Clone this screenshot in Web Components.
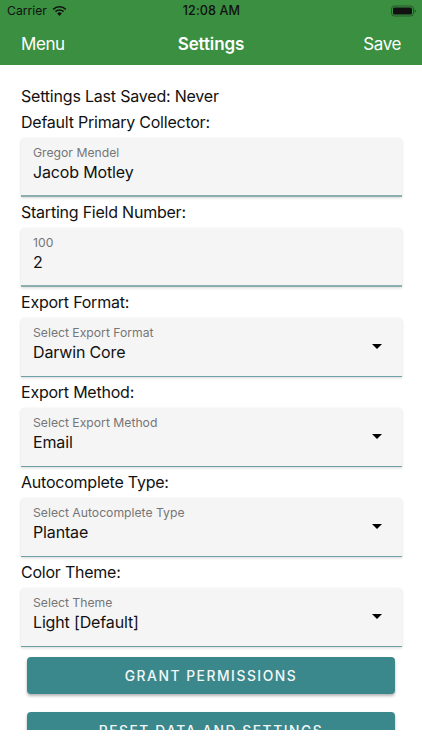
<!DOCTYPE html>
<html>
<head>
<meta charset="utf-8">
<title>Settings</title>
<style>
  html, body { margin: 0; padding: 0; background: #fff; }
  body { font-family: Inter, "Liberation Sans", sans-serif; color: #111; }
</style>
</head>
<body>
<settings-screen>
  <status-bar slot="top"></status-bar>
  <nav-bar slot="top" heading="Settings" left="Menu" right="Save"></nav-bar>
  <plain-line>Settings Last Saved: Never</plain-line>
  <form-row label="Default Primary Collector:" hint="Gregor Mendel" value="Jacob Motley"></form-row>
  <form-row label="Starting Field Number:" hint="100" value="2"></form-row>
  <form-row label="Export Format:" hint="Select Export Format" value="Darwin Core" dropdown></form-row>
  <form-row label="Export Method:" hint="Select Export Method" value="Email" dropdown></form-row>
  <form-row label="Autocomplete Type:" hint="Select Autocomplete Type" value="Plantae" dropdown></form-row>
  <form-row label="Color Theme:" hint="Select Theme" value="Light [Default]" dropdown></form-row>
  <raised-button>Grant Permissions</raised-button>
  <raised-button>Reset Data and Settings</raised-button>
</settings-screen>

<script>
class SettingsScreen extends HTMLElement {
  connectedCallback() {
    this.attachShadow({ mode: 'open' });
    this.shadowRoot.innerHTML = `
      <style>
        :host { display: flex; flex-direction: column; width: 422px; height: 750px; overflow: hidden; background: #fff; }
        .scroll { height: 665px; flex: none; overflow: hidden; padding: 0 20px; box-sizing: border-box; }
      </style>
      <slot name="top"></slot>
      <div class="scroll"><slot></slot></div>
    `;
  }
}

class StatusBar extends HTMLElement {
  connectedCallback() {
    this.attachShadow({ mode: 'open' });
    this.shadowRoot.innerHTML = `
      <style>
        :host { display: grid; grid-template-columns: 1fr auto 1fr; align-items: center; height: 20px; padding: 1px 6px 0 7px; box-sizing: border-box; background: #3a8f40; color: #111; font-size: 12.2px; }
        .left { display: flex; align-items: center; gap: 5px; }
        .time { font-weight: 500; font-size: 12.6px; letter-spacing: .1px; }
        .batt { justify-self: end; display: flex; }
        svg { display: block; }
      </style>
      <div class="left">
        <span>Carrier</span>
        <svg width="15" height="12" viewBox="0 0 16 12">
          <path d="M8 11.2 5.6 8.6a3.4 3.4 0 0 1 4.8 0z" fill="#111"/>
          <path d="M3.7 6.7a6.1 6.1 0 0 1 8.6 0" fill="none" stroke="#111" stroke-width="1.7"/>
          <path d="M1.3 4.2a9.6 9.6 0 0 1 13.4 0" fill="none" stroke="#111" stroke-width="1.7"/>
        </svg>
      </div>
      <span class="time">12:08 AM</span>
      <svg class="batt" width="25" height="12" viewBox="0 0 25 12">
        <rect x=".5" y="1" width="22" height="10" rx="3" fill="none" stroke="#111" stroke-opacity=".45"/>
        <rect x="2" y="2.5" width="19" height="7" rx="1.6" fill="#111"/>
        <path d="M23.6 4.4c.8.2 1.2.8 1.2 1.6s-.4 1.4-1.2 1.6z" fill="#111" fill-opacity=".5"/>
      </svg>
    `;
  }
}

class NavBar extends HTMLElement {
  connectedCallback() {
    this.attachShadow({ mode: 'open' });
    this.shadowRoot.innerHTML = `
      <style>
        :host { display: flex; justify-content: space-between; align-items: center; height: 45px; padding: 2px 21px 0; box-sizing: border-box; background: #3a8f40; color: #fff; font-size: 17px; letter-spacing: -.4px; position: relative; }
        .title { font-weight: 600; font-size: 17px; letter-spacing: -.1px; position: absolute; left: 0; right: 0; text-align: center; }
      </style>
      <span>${this.getAttribute('left')}</span>
      <span class="title">${this.getAttribute('heading')}</span>
      <span>${this.getAttribute('right')}</span>
    `;
  }
}

class PlainLine extends HTMLElement {
  connectedCallback() {
    this.attachShadow({ mode: 'open' });
    this.shadowRoot.innerHTML = `
      <style>
        :host { display: block; height: 22px; line-height: 22px; margin: 20px 1px 0; font-size: 16px; letter-spacing: -.2px; color: #111; }
      </style>
      <slot></slot>
    `;
  }
}

class FormRow extends HTMLElement {
  connectedCallback() {
    this.attachShadow({ mode: 'open' });
    const dropdown = this.hasAttribute('dropdown');
    this.shadowRoot.innerHTML = `
      <style>
        :host { display: block; }
        .label { height: 31px; box-sizing: border-box; padding: 2px 0 0 1px; line-height: 26px; font-size: 16px; letter-spacing: -.23px; color: #111; }
        .field { position: relative; height: 59px; box-sizing: border-box; margin: 0 .5px; padding: 7px 12.5px 0; background: #f5f5f5; border-radius: 4px 4px 0 0; border-bottom: 2px solid #8caeb1; box-shadow: 0 1px 3px rgba(0,0,0,.16); }
        :host([dropdown]) .field { height: 58.5px; margin-bottom: .5px; border-bottom: 1px solid #6fa0a6; }
        .hint { font-size: 12.2px; line-height: 16px; color: #757575; }
        .value { font-size: 16px; line-height: 22px; letter-spacing: -.15px; color: #111; }
        .caret { position: absolute; right: 19.5px; top: 25.5px; width: 0; height: 0; border-left: 5px solid transparent; border-right: 5px solid transparent; border-top: 5px solid #000; }
      </style>
      <div class="label">${this.getAttribute('label')}</div>
      <div class="field">
        <div class="hint">${this.getAttribute('hint')}</div>
        <div class="value">${this.getAttribute('value')}</div>
        ${dropdown ? '<span class="caret"></span>' : ''}
      </div>
    `;
  }
}

class RaisedButton extends HTMLElement {
  connectedCallback() {
    this.attachShadow({ mode: 'open' });
    this.shadowRoot.innerHTML = `
      <style>
        :host { display: block; margin: 10.5px 7px 18px; }
        button { display: block; width: 100%; height: 37px; padding: 0; border: 0; border-radius: 4px; background: #3b888c; color: #f4f7f7; font: 500 13.8px Inter, "Liberation Sans", sans-serif; letter-spacing: 1.55px; text-transform: uppercase; box-shadow: 0 2px 3px rgba(0,0,0,.3); }
      </style>
      <button><slot></slot></button>
    `;
  }
}

customElements.define('settings-screen', SettingsScreen);
customElements.define('status-bar', StatusBar);
customElements.define('nav-bar', NavBar);
customElements.define('plain-line', PlainLine);
customElements.define('form-row', FormRow);
customElements.define('raised-button', RaisedButton);
</script>
</body>
</html>
